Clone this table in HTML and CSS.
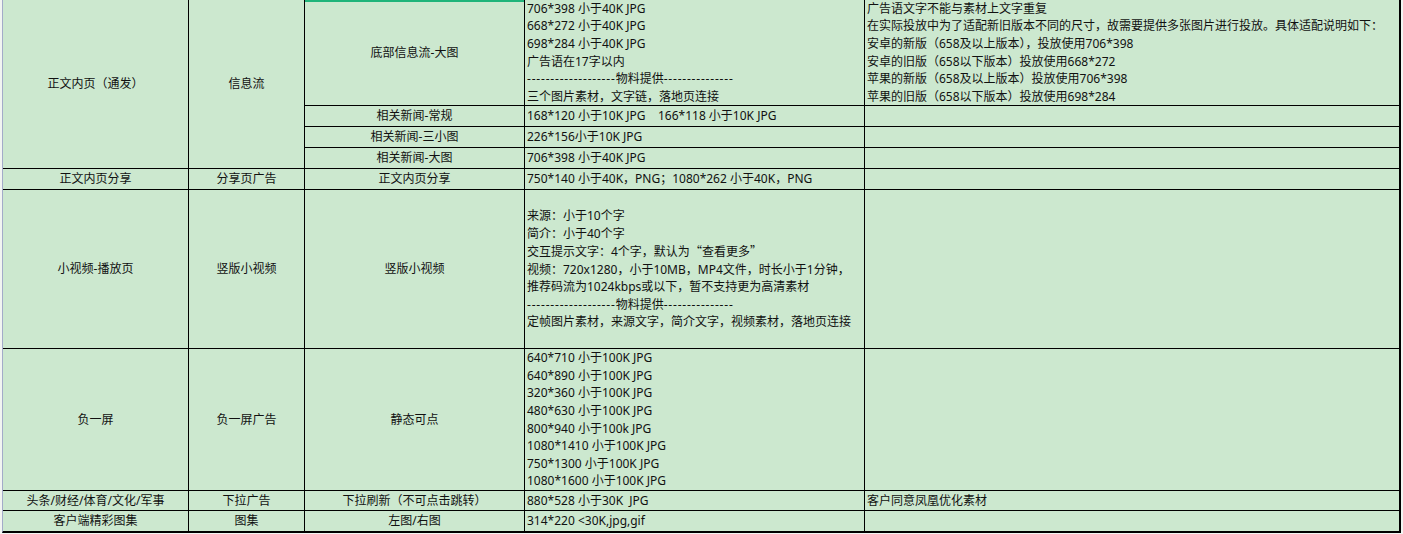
FILE: index.html
```html
<!DOCTYPE html>
<html lang="zh-CN">
<head>
<meta charset="utf-8">
<title>广告规格</title>
<link rel="stylesheet" href="styles.css">
</head>
<body>
<div class="sheet">
  <div class="cell c span4">正文内页（通发）</div>
  <div class="cell c span4">信息流</div>
  <div class="cell c selected">底部信息流-大图</div>
  <div class="cell l">
    <div class="lines">
      <div>706*398 小于40K JPG</div>
      <div>668*272 小于40K JPG</div>
      <div>698*284 小于40K JPG</div>
      <div>广告语在17字以内</div>
      <div><span class="dash">-------------------</span>物料提供<span class="dash">---------------</span></div>
      <div>三个图片素材，文字链，落地页连接</div>
    </div>
  </div>
  <div class="cell l">
    <div class="lines">
      <div>广告语文字不能与素材上文字重复</div>
      <div>在实际投放中为了适配新旧版本不同的尺寸，故需要提供多张图片进行投放。具体适配说明如下：</div>
      <div>安卓的新版（658及以上版本），投放使用706*398</div>
      <div>安卓的旧版（658以下版本）投放使用668*272</div>
      <div>苹果的新版（658及以上版本）投放使用706*398</div>
      <div>苹果的旧版（658以下版本）投放使用698*284</div>
    </div>
  </div>

  <div class="cell c">相关新闻-常规</div>
  <div class="cell l"><span class="pre">168*120 小于10K JPG    166*118 小于10K JPG</span></div>
  <div class="cell l"></div>

  <div class="cell c">相关新闻-三小图</div>
  <div class="cell l">226*156小于10K JPG</div>
  <div class="cell l"></div>

  <div class="cell c">相关新闻-大图</div>
  <div class="cell l">706*398 小于40K JPG</div>
  <div class="cell l"></div>

  <div class="cell c">正文内页分享</div>
  <div class="cell c">分享页广告</div>
  <div class="cell c">正文内页分享</div>
  <div class="cell l">750*140 小于40K，PNG；1080*262 小于40K，PNG</div>
  <div class="cell l"></div>

  <div class="cell c">小视频-播放页</div>
  <div class="cell c">竖版小视频</div>
  <div class="cell c">竖版小视频</div>
  <div class="cell l">
    <div class="lines">
      <div>来源：小于10个字</div>
      <div>简介：小于40个字</div>
      <div>交互提示文字：4个字，默认为<span class="cjk">“查看更多”</span></div>
      <div>视频：720x1280，小于10MB，MP4文件，时长小于1分钟，</div>
      <div>推荐码流为1024kbps或以下，暂不支持更为高清素材</div>
      <div><span class="dash">-------------------</span>物料提供<span class="dash">---------------</span></div>
      <div>定帧图片素材，来源文字，简介文字，视频素材，落地页连接</div>
    </div>
  </div>
  <div class="cell l"></div>

  <div class="cell c">负一屏</div>
  <div class="cell c">负一屏广告</div>
  <div class="cell c">静态可点</div>
  <div class="cell l">
    <div class="lines">
      <div>640*710 小于100K JPG</div>
      <div>640*890 小于100K JPG</div>
      <div>320*360 小于100K JPG</div>
      <div>480*630 小于100K JPG</div>
      <div>800*940 小于100k JPG</div>
      <div>1080*1410 小于100K JPG</div>
      <div>750*1300 小于100K JPG</div>
      <div>1080*1600 小于100K JPG</div>
    </div>
  </div>
  <div class="cell l"></div>

  <div class="cell c">头条/财经/体育/文化/军事</div>
  <div class="cell c">下拉广告</div>
  <div class="cell c">下拉刷新（不可点击跳转）</div>
  <div class="cell l"><span class="pre">880*528 小于30K  JPG</span></div>
  <div class="cell l">客户同意凤凰优化素材</div>

  <div class="cell c">客户端精彩图集</div>
  <div class="cell c">图集</div>
  <div class="cell c">左图/右图</div>
  <div class="cell l">314*220 &lt;30K,jpg,gif</div>
  <div class="cell l"></div>
</div>
</body>
</html>
```

FILE: styles.css
```css
html, body {
  margin: 0;
  padding: 0;
}
body {
  background: #f2f5f2;
  width: 1403px;
  height: 534px;
  overflow: hidden;
  font-family: "Noto Sans", "Noto Sans CJK SC", sans-serif;
  font-size: 12px;
  color: #111;
}
.sheet {
  margin-left: 2px;
  width: 1396px;
  display: grid;
  grid-template-columns: 185px 115px 219px 339px 534px;
  grid-template-rows: 105px 20px 20px 20px 20px 158px 141px 19px 20px;
  gap: 1px;
  background: #000;
  border-left: 1px solid #a3abc9;
  border-right: 2px solid #000;
  border-bottom: 2px solid #000;
}
.cell {
  background: #cce8cf;
  display: flex;
  align-items: center;
  white-space: nowrap;
  line-height: 17.6px;
  overflow: hidden;
}
.c {
  justify-content: center;
}
.l {
  justify-content: flex-start;
  padding-left: 2px;
}
.span4 {
  grid-row: span 4;
}
.selected {
  box-shadow: inset 0 2px 0 #1fb47a;
}
.lines {
  display: flex;
  flex-direction: column;
}
.pre {
  white-space: pre;
}
.dash {
  letter-spacing: 0.8px;
}
.cjk {
  font-family: "Noto Sans CJK SC", sans-serif;
}
```
